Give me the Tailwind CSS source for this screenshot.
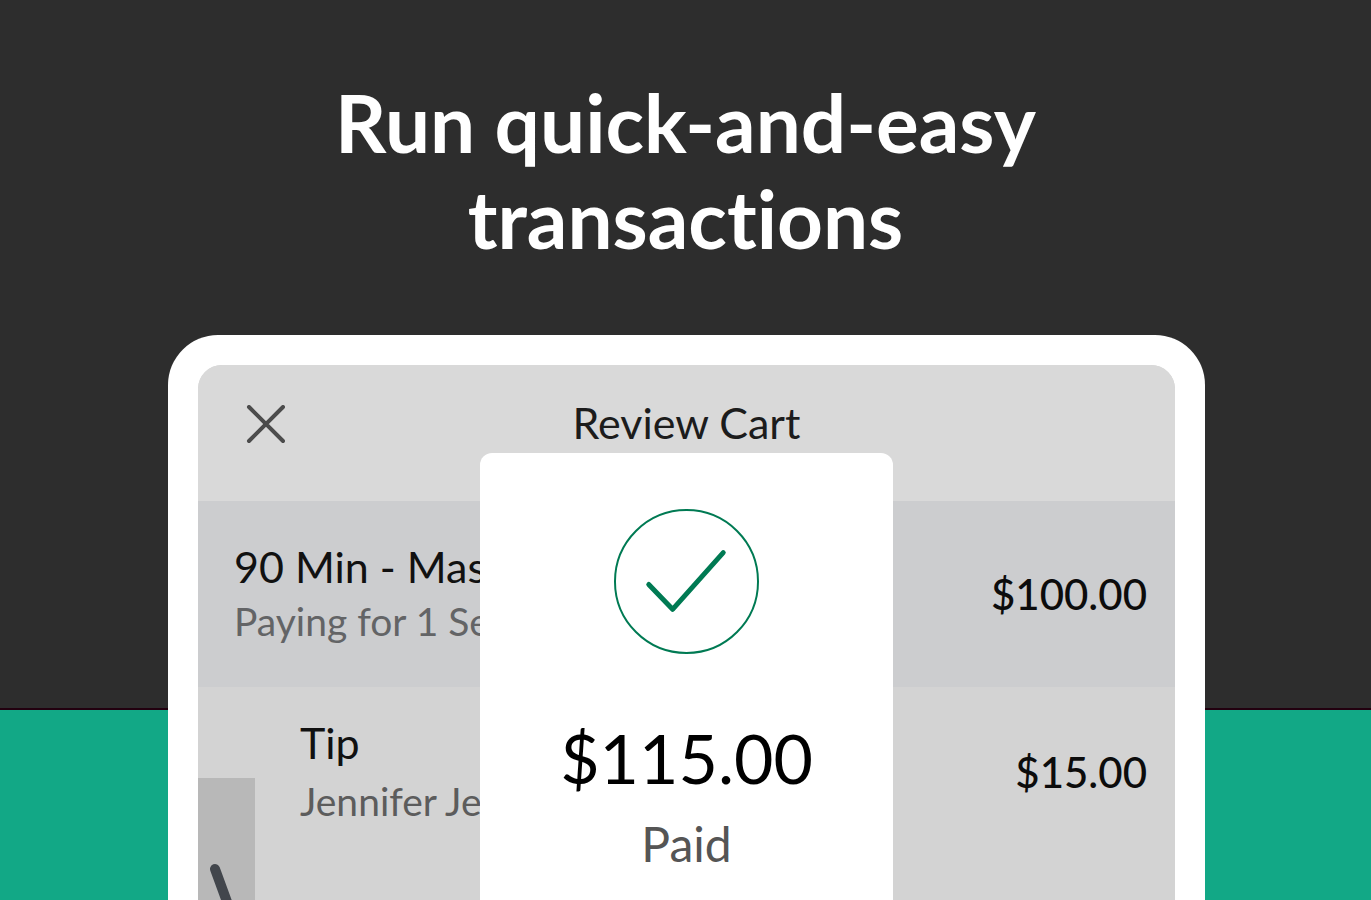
<!DOCTYPE html>
<html lang="en">
<head>
    <meta charset="UTF-8" />
    <meta name="viewport" content="width=device-width, initial-scale=1" />
    <title>Review Cart</title>
    <script src="https://cdn.jsdelivr.net/npm/@tailwindcss/browser@4"></script>
</head>
<body class="font-[Lato,sans-serif] [font-variant-ligatures:none]">
<main class="h-screen overflow-hidden flex flex-col bg-[linear-gradient(#2d2d2d_708px,#22000f_708px,#22000f_710px,#12a886_710px)]">
    <h1 class="mx-auto pt-[74px] h-[335px] shrink-0 max-w-[800px] text-center text-[80px] leading-[96px] font-bold text-white">Run quick-and-easy transactions</h1>

    <!-- Device -->
    <div class="relative flex-1 ml-[168px] mr-[166px] pt-[30px] px-[30px] bg-white rounded-t-[50px]">
        <div class="h-full flex flex-col overflow-hidden rounded-t-[24px] bg-[#d3d3d3]">
            <header class="relative flex items-center justify-center h-[136px] shrink-0 pb-5 bg-[#d9d9d9]">
                <button type="button" aria-label="Close" class="absolute left-12 top-10 text-[#4c4c4c]">
                    <svg class="size-10" viewBox="0 0 40 40" fill="none" stroke="currentColor" stroke-width="4" stroke-linecap="round"><path d="M3 2l34 34M37 2L3 36" /></svg>
                </button>
                <h2 class="text-[43px] leading-[48px] text-[#1c1c1c]">Review Cart</h2>
            </header>
            <div class="flex items-center justify-between h-[186px] shrink-0 pl-9 pr-7 bg-[#cccdcf]">
                <div>
                    <p class="text-[43px] leading-[54px] text-[#111111]">90 Min - Massage</p>
                    <p class="text-[39px] leading-[54px] text-[#636466]">Paying for 1 Session</p>
                </div>
                <p class="text-[42px] leading-[54px] font-medium text-[#0c0c0c]">$100.00</p>
            </div>
            <div class="flex flex-1 justify-between pr-7">
                <div class="flex">
                    <div class="mt-[91px] mr-[45px] w-[57px] bg-[#b8b8b8] overflow-hidden">
                        <svg class="w-[57px] h-[122px]" viewBox="0 0 57 122" fill="none" stroke="#42464c" stroke-width="10" stroke-linecap="round"><path d="M17 91L32 132" /></svg>
                    </div>
                    <div class="pt-[29px]">
                        <p class="text-[43px] leading-[54px] text-[#111111]">Tip</p>
                        <p class="text-[39px] leading-[62px] text-[#5c5c5c]">Jennifer Jenkins</p>
                    </div>
                </div>
                <p class="pt-[58px] text-[42px] leading-[54px] font-medium text-[#0c0c0c]">$15.00</p>
            </div>
        </div>

        <!-- Payment confirmation -->
        <div role="dialog" aria-label="Payment confirmation" class="absolute inset-x-0 top-[118px] bottom-0 mx-auto w-[413px] pt-[55px] flex flex-col items-center rounded-t-xl bg-white">
            <svg class="size-[147px] shrink-0" viewBox="0 0 148 148" fill="none" stroke="#007a53"><circle cx="74" cy="74" r="72" stroke-width="2" /><path d="M36 77l24 25 51-57" stroke-width="5" stroke-linecap="round" stroke-linejoin="round" /></svg>
            <p class="mt-[57px] text-[68px] leading-[92px] text-black">$115.00</p>
            <p class="text-[48px] leading-[80px] text-[#555555]">Paid</p>
        </div>
    </div>
</main>
</body>
</html>
